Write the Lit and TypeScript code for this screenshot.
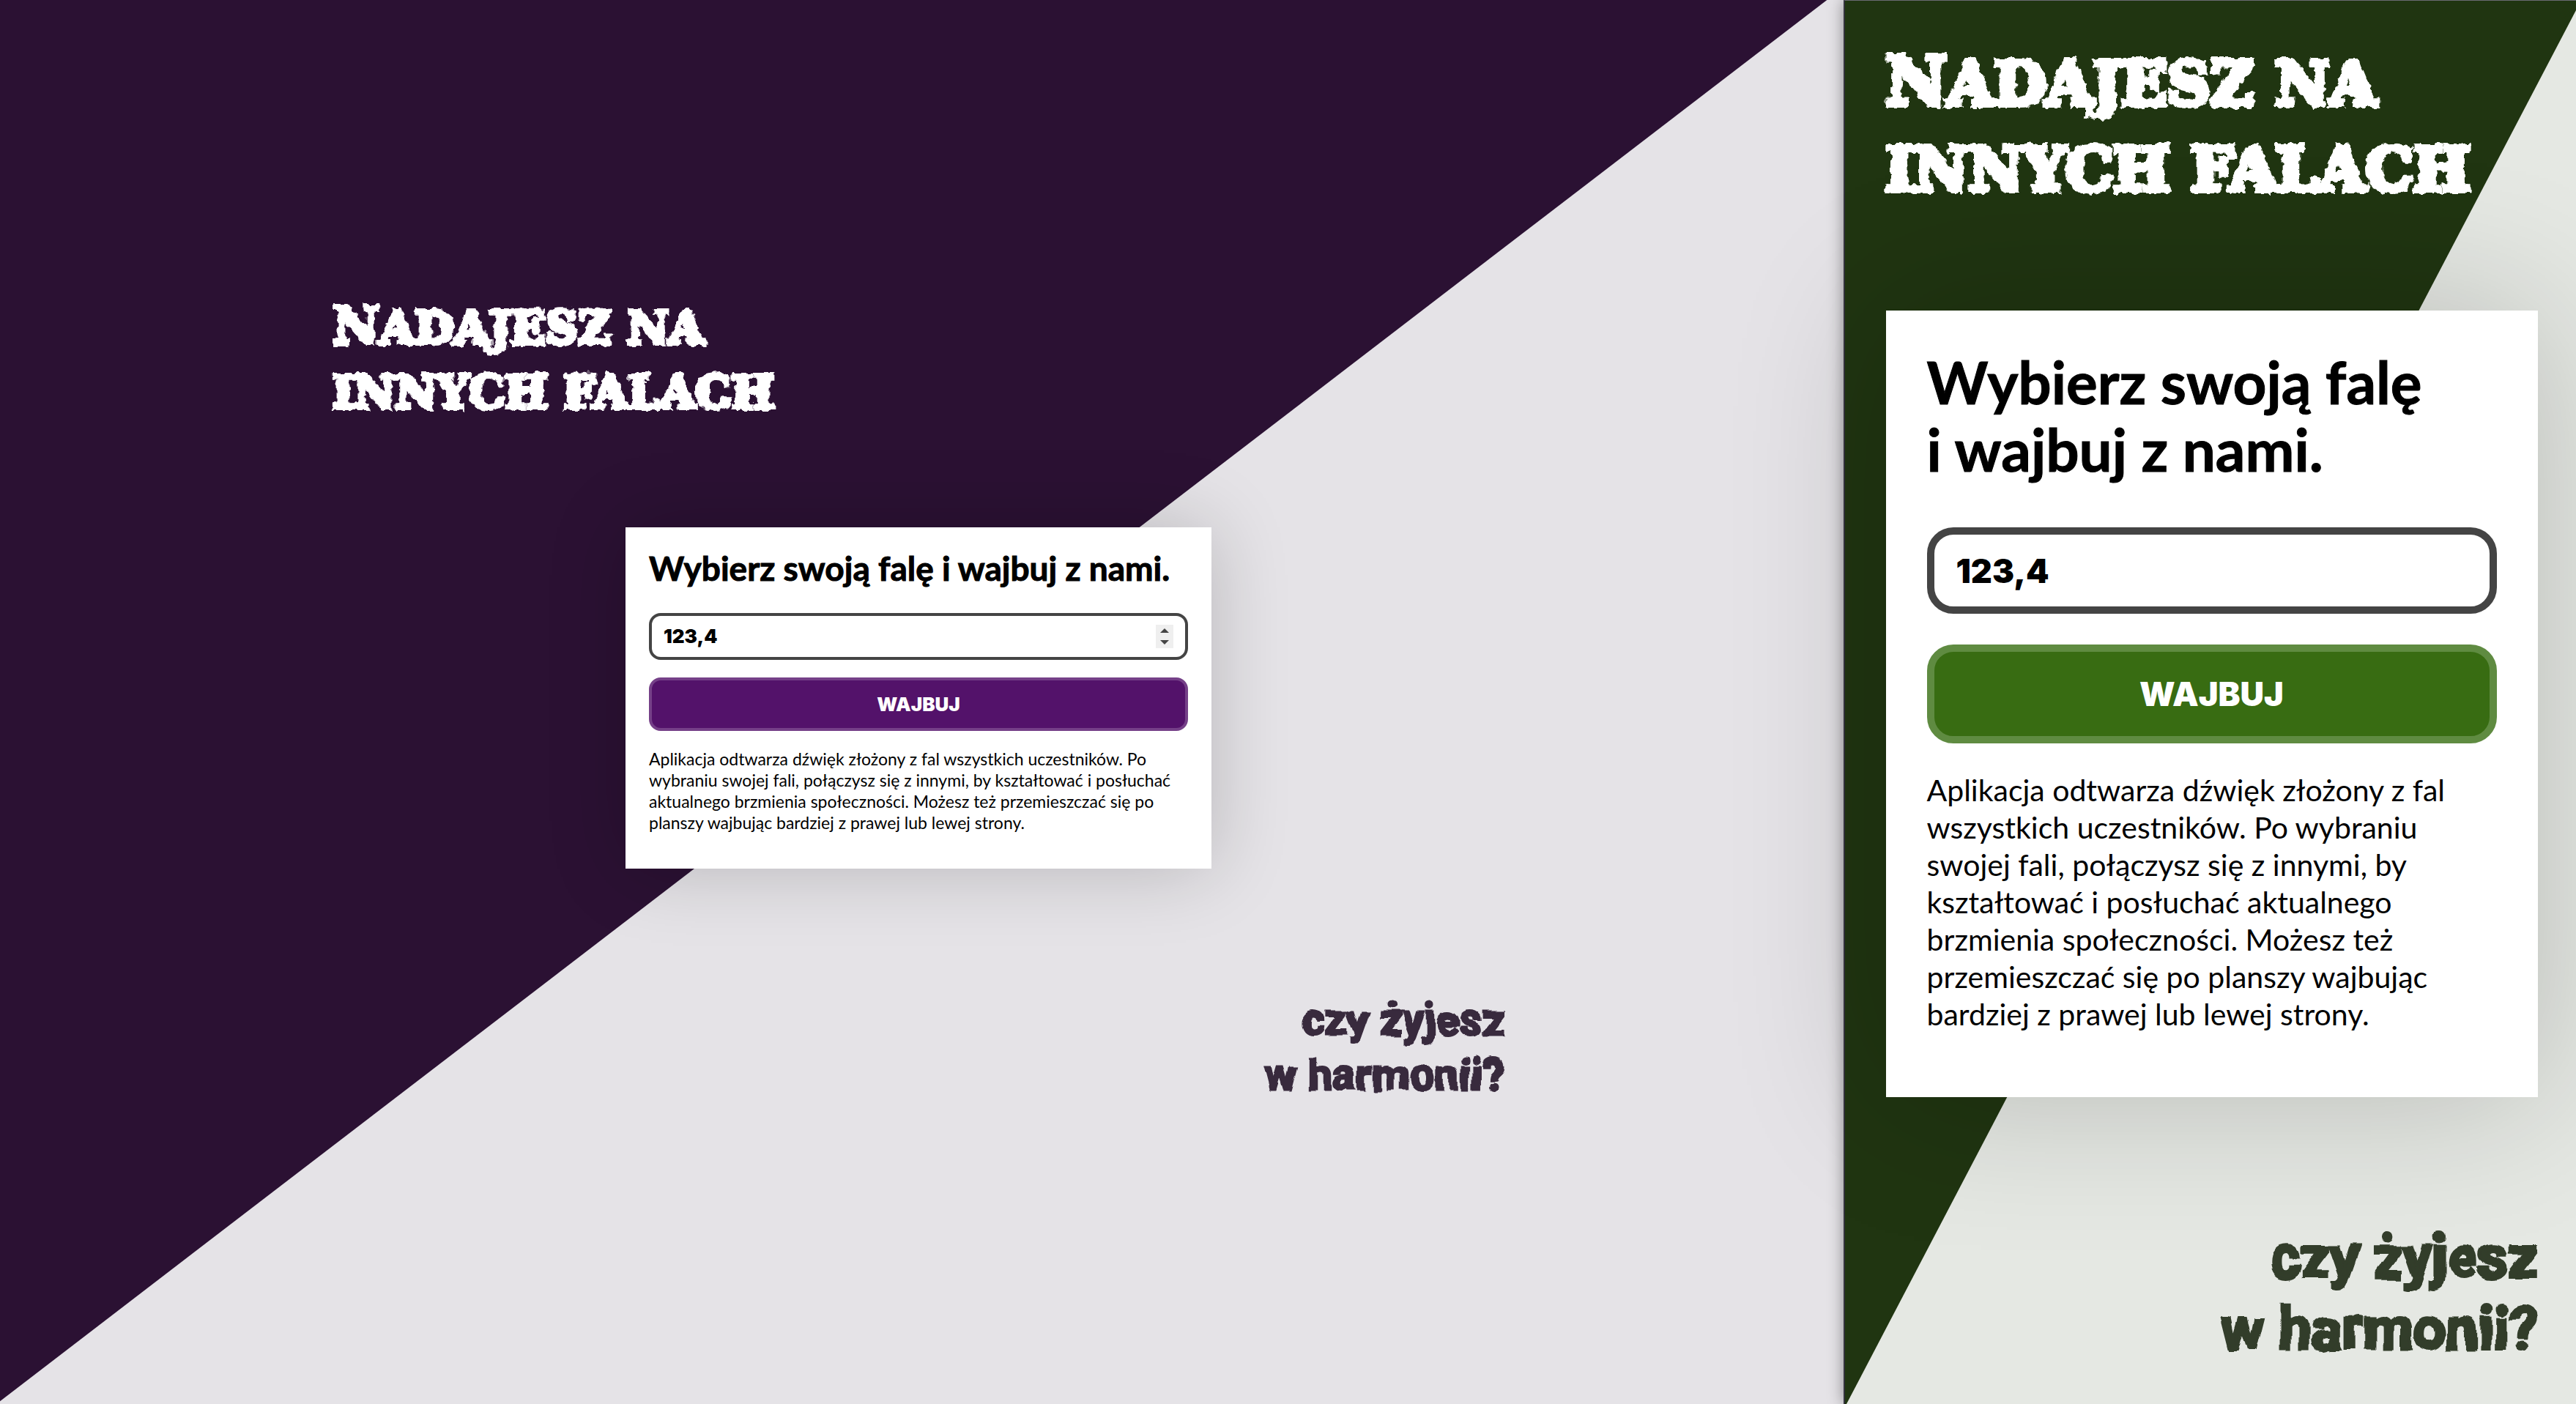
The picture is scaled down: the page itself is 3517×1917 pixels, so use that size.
import { LitElement, html, css } from "lit";
import { customElement, property, state } from "lit/decorators.js";

@customElement("wave-panel")
class WavePanel extends LitElement {
  @property({ type: Boolean }) spinner = false;
  @property({ attribute: false }) heading: string[] = [];
  @property({ attribute: false }) copy: string[] = [];
  @state() private wave = 123.4;

  static styles = css`
    :host {
      display: flex;
      flex-direction: column;
      justify-content: center;
      position: relative;
      isolation: isolate;
      box-sizing: border-box;
      min-height: 100vh;
      background: var(--light);
    }
    .wedge {
      position: absolute;
      inset: 0;
      z-index: -1;
      background: var(--dark);
      clip-path: var(--wedge);
    }
    .content {
      display: flex;
      flex-direction: column;
      width: 100%;
      max-width: var(--content-width);
      margin: 0 auto;
    }
    .filters {
      position: absolute;
      width: 0;
      height: 0;
    }
    .title {
      margin: 0;
      color: #fff;
      font-family: "DejaVu Serif", serif;
      font-weight: 700;
      font-size: var(--title-size);
      line-height: var(--title-line);
      text-transform: uppercase;
      white-space: nowrap;
      -webkit-text-stroke: var(--title-stroke) #fff;
      filter: url(#rough);
    }
    .initial {
      font-size: var(--initial-size);
      line-height: 1px;
    }
    .card {
      box-sizing: border-box;
      align-self: center;
      width: 100%;
      max-width: var(--card-width);
      margin: var(--card-top) 0 var(--card-bottom);
      padding: var(--card-padding);
      background: #fff;
      box-shadow: 0 0 var(--shadow) rgba(0, 0, 0, 0.2);
      color: #000;
      font-family: Lato, sans-serif;
      display: flex;
      flex-direction: column;
    }
    .heading {
      margin: 0 0 var(--heading-gap);
      font-size: var(--heading-size);
      line-height: var(--heading-line);
      font-weight: 700;
      white-space: nowrap;
      -webkit-text-stroke: 1px #000;
    }
    .field {
      box-sizing: border-box;
      height: var(--field-height);
      border: var(--border) solid #444;
      border-radius: var(--radius);
      padding: 0 var(--field-padding);
      display: flex;
      align-items: center;
      margin-bottom: var(--field-gap);
    }
    .field input {
      flex: 1;
      min-width: 0;
      border: 0;
      padding: 0;
      outline: 0;
      background: none;
      color: #000;
      font: 900 var(--control-size) Inter, sans-serif;
    }
    .steps {
      display: flex;
      flex-direction: column;
      width: 24px;
      height: 32px;
      background: #efefef;
    }
    .steps button {
      flex: 1;
      display: flex;
      align-items: center;
      justify-content: center;
      padding: 0;
      border: 0;
      background: none;
    }
    .steps svg {
      width: 12px;
      height: 6px;
      fill: #444;
    }
    .submit {
      box-sizing: border-box;
      height: var(--submit-height);
      border: var(--border) solid var(--accent-edge);
      border-radius: var(--radius);
      background: var(--accent);
      color: #fff;
      padding: 0;
      font: 900 var(--control-size) Inter, sans-serif;
      margin-bottom: var(--submit-gap);
    }
    .copy {
      margin: 0;
      font-size: var(--copy-size);
      line-height: var(--copy-line);
      white-space: nowrap;
    }
    .tagline {
      margin: 0;
      align-self: flex-end;
      text-align: right;
      color: var(--tagline);
      font-family: "Liberation Sans Narrow", Roboto, sans-serif;
      font-weight: 700;
      font-size: var(--tagline-size);
      line-height: var(--tagline-line);
      -webkit-text-stroke: var(--tagline-stroke) var(--tagline);
      stroke-linejoin: round;
      filter: url(#brush);
    }
  `;

  private step(delta: number) {
    this.wave = Math.round((this.wave + delta) * 10) / 10;
  }

  private lines(rows: string[]) {
    return rows.map((row, i) => (i ? html`<br />${row}` : row));
  }

  render() {
    return html`
      <svg class="filters" aria-hidden="true">
        <filter id="rough" x="-2%" y="-5%" width="104%" height="110%">
          <feTurbulence type="fractalNoise" baseFrequency="0.11" numOctaves="2" seed="4" result="n" />
          <feDisplacementMap in="SourceGraphic" in2="n" scale="9" xChannelSelector="R" yChannelSelector="G" />
        </filter>
        <filter id="brush" x="-2%" y="-5%" width="104%" height="110%">
          <feTurbulence type="fractalNoise" baseFrequency="0.03" numOctaves="1" seed="7" result="n" />
          <feDisplacementMap in="SourceGraphic" in2="n" scale="12" xChannelSelector="R" yChannelSelector="G" />
        </filter>
      </svg>
      <div class="wedge"></div>
      <div class="content">
        <h1 class="title"><span class="initial">N</span>adajesz na<br />innych falach</h1>
        <form class="card" @submit=${(e: Event) => e.preventDefault()}>
          <h2 class="heading"><label for="wave">${this.lines(this.heading)}</label></h2>
          <div class="field">
            <input id="wave" type="text" inputmode="decimal" .value=${this.wave.toFixed(1).replace(".", ",")} />
            ${this.spinner
              ? html`<div class="steps">
                  <button type="button" aria-label="Zwiększ" @click=${() => this.step(0.1)}>
                    <svg viewBox="0 0 12 6"><path d="M0 6 6 0l6 6z" /></svg>
                  </button>
                  <button type="button" aria-label="Zmniejsz" @click=${() => this.step(-0.1)}>
                    <svg viewBox="0 0 12 6"><path d="M0 0h12L6 6z" /></svg>
                  </button>
                </div>`
              : null}
          </div>
          <button class="submit" type="submit">WAJBUJ</button>
          <p class="copy">${this.lines(this.copy)}</p>
        </form>
        <p class="tagline">czy żyjesz<br />w harmonii?</p>
      </div>
    `;
  }
}

@customElement("app-root")
class AppRoot extends LitElement {
  static styles = css`
    :host {
      display: grid;
      grid-template-columns: 2517fr 1000fr;
      min-height: 100vh;
      overflow: hidden;
    }
    .desktop {
      --light: #e5e3e7;
      --dark: #2b1133;
      --wedge: polygon(0 0, 99.1% 0, 0 99.8%);
      --accent: #53126a;
      --accent-edge: #754088;
      --tagline: #392a3d;
      --content-width: 1600px;
      --title-size: 62px;
      --initial-size: 70px;
      --title-line: 88px;
      --title-stroke: 6px;
      --card-width: 800px;
      --card-padding: 30px 32px 48px;
      --card-top: 140px;
      --card-bottom: 169px;
      --shadow: 100px;
      --heading-size: 46px;
      --heading-line: 52px;
      --heading-gap: 35px;
      --field-height: 64px;
      --field-padding: 16px;
      --field-gap: 24px;
      --submit-height: 73px;
      --submit-gap: 24px;
      --border: 4px;
      --radius: 16px;
      --control-size: 26px;
      --copy-size: 23px;
      --copy-line: 29px;
      --tagline-size: 60px;
      --tagline-line: 75px;
      --tagline-stroke: 3px;
      padding: 0 9px 9px 0;
    }
    .mobile {
      --light: #e5e8e3;
      --dark: #203511;
      --wedge: polygon(0 0, 100% 0, 100% 13px, 2px 100%, 0 100%);
      --accent: #386c12;
      --accent-edge: #5f8b41;
      --tagline: #333c2b;
      --content-width: 890px;
      --title-size: 82px;
      --initial-size: 92px;
      --title-line: 117px;
      --title-stroke: 8px;
      --card-width: 890px;
      --card-padding: 51px 56px 88px;
      --card-top: 134px;
      --card-bottom: 170px;
      --shadow: 200px;
      --heading-size: 80px;
      --heading-line: 92px;
      --heading-gap: 61px;
      --field-height: 118px;
      --field-padding: 30px;
      --field-gap: 42px;
      --submit-height: 135px;
      --submit-gap: 38px;
      --border: 10px;
      --radius: 36px;
      --control-size: 45px;
      --copy-size: 41px;
      --copy-line: 51px;
      --tagline-size: 79px;
      --tagline-line: 98px;
      --tagline-stroke: 4px;
      padding: 2px 0 0 3px;
      border-left: 2px solid #34333d;
      border-top: 1px solid #6a6a72;
      box-shadow: 0 0 20px rgba(0, 0, 0, 0.4);
    }
  `;

  render() {
    return html`
      <wave-panel
        class="desktop"
        spinner
        .heading=${["Wybierz swoją falę i wajbuj z nami."]}
        .copy=${[
          "Aplikacja odtwarza dźwięk złożony z fal wszystkich uczestników. Po",
          "wybraniu swojej fali, połączysz się z innymi, by kształtować i posłuchać",
          "aktualnego brzmienia społeczności. Możesz też przemieszczać się po",
          "planszy wajbując bardziej z prawej lub lewej strony.",
        ]}
      ></wave-panel>
      <wave-panel
        class="mobile"
        .heading=${["Wybierz swoją falę", "i wajbuj z nami."]}
        .copy=${[
          "Aplikacja odtwarza dźwięk złożony z fal",
          "wszystkich uczestników. Po wybraniu",
          "swojej fali, połączysz się z innymi, by",
          "kształtować i posłuchać aktualnego",
          "brzmienia społeczności. Możesz też",
          "przemieszczać się po planszy wajbując",
          "bardziej z prawej lub lewej strony.",
        ]}
      ></wave-panel>
    `;
  }
}
